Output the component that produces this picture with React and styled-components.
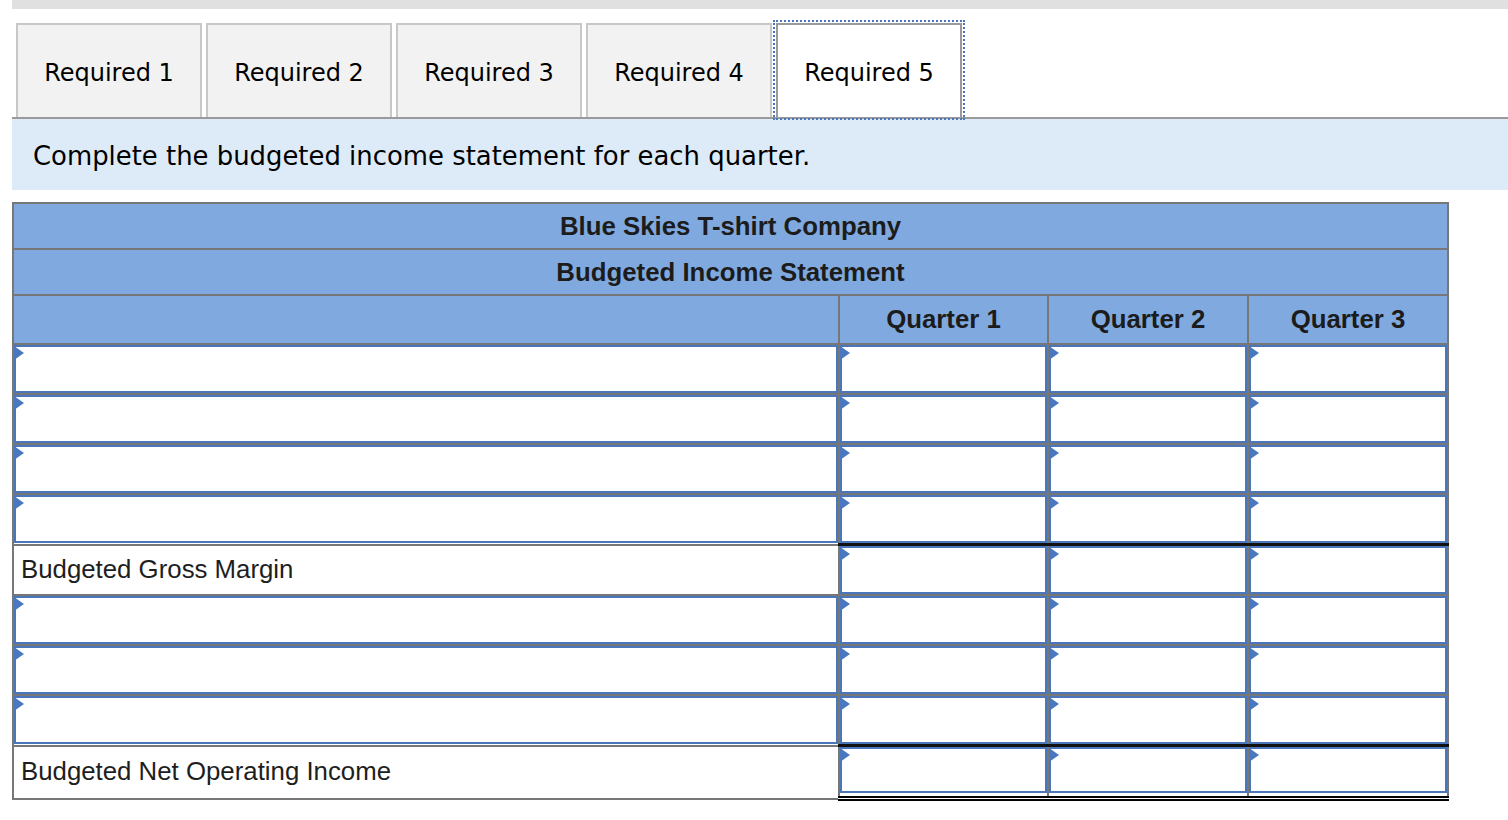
import React from 'react'
import styled, { createGlobalStyle, css } from 'styled-components'

const GlobalStyle = createGlobalStyle`
  html, body {
    margin: 0;
    padding: 0;
    background: #fff;
  }
`

const Page = styled.div`
  width: 1508px;
  padding-left: 12px;
  box-sizing: border-box;
`

const TopBar = styled.div`
  height: 9px;
  background: #e0e0e0;
`

const TabRow = styled.div`
  display: flex;
  gap: 4px;
  margin-top: 14px;
  padding-left: 4px;
  border-bottom: 2px solid #9a9a9a;
`

const Tab = styled.button`
  width: 186px;
  height: 94px;
  box-sizing: border-box;
  margin: 0;
  padding: 4px 0 0;
  background: #f2f2f2;
  border: 2px solid #c8c8c8;
  border-bottom: none;
  font-family: 'DejaVu Sans', Verdana, sans-serif;
  font-size: 24px;
  color: #000;
  cursor: pointer;

  ${(p) =>
    p.active &&
    css`
      background: #fff;
      border-color: #9a9a9a;
      outline: 2px dotted #4a78c0;
      outline-offset: 1px;
    `}
`

const Banner = styled.div`
  height: 71px;
  display: flex;
  align-items: center;
  padding: 3px 0 0 21px;
  box-sizing: border-box;
  background: #ddeaf7;
  font-family: 'DejaVu Sans', Verdana, sans-serif;
  font-size: 25.9px;
  color: #000;
`

const Table = styled.table`
  margin-top: 12px;
  width: 1436px;
  table-layout: fixed;
  border-collapse: collapse;
  font-family: 'Liberation Sans', Arial, sans-serif;
  font-size: 25.8px;
  color: #1e1e1e;
`

const Head = styled.th`
  height: ${(p) => p.h}px;
  padding: 0;
  background: #80aadf;
  border: 2px solid #777;
  font-weight: bold;
  text-align: center;
  color: #1c1c1c;
`

const Cell = styled.td`
  height: ${(p) => p.h}px;
  padding: 0;
  border: 2px solid #777;
  vertical-align: top;

  ${(p) =>
    p.total &&
    css`
      border-top: 3px solid #111;
    `}
  ${(p) =>
    p.double &&
    css`
      border-bottom: 5px double #000;
    `}
`

const Label = styled.div`
  height: ${(p) => p.h}px;
  display: flex;
  align-items: center;
  padding-left: 7px;
`

const Field = styled.div`
  position: relative;

  &::before {
    content: '';
    position: absolute;
    left: 0;
    top: 1px;
    border-left: 10px solid #4a78c0;
    border-top: 7px solid transparent;
    border-bottom: 7px solid transparent;
  }
`

const Input = styled.input`
  display: block;
  width: 100%;
  height: ${(p) => p.h}px;
  box-sizing: border-box;
  margin: 0;
  border: 2px solid #4a77bc;
  background: #fff;
  font: inherit;
  outline: none;
`

const rows = [
  { kind: 'input' },
  { kind: 'input' },
  { kind: 'input' },
  { kind: 'input' },
  { kind: 'label', text: 'Budgeted Gross Margin' },
  { kind: 'input' },
  { kind: 'input' },
  { kind: 'input' },
  { kind: 'label', text: 'Budgeted Net Operating Income', last: true },
]

const quarters = ['Quarter 1', 'Quarter 2', 'Quarter 3']

export default function App() {
  return (
    <Page>
      <GlobalStyle />
      <TopBar />
      <TabRow>
        {[1, 2, 3, 4, 5].map((n) => (
          <Tab key={n} active={n === 5}>
            Required {n}
          </Tab>
        ))}
      </TabRow>
      <Banner>Complete the budgeted income statement for each quarter.</Banner>
      <Table>
        <colgroup>
          <col style={{ width: 826 }} />
          <col style={{ width: 209 }} />
          <col style={{ width: 200 }} />
          <col style={{ width: 200 }} />
        </colgroup>
        <thead>
          <tr>
            <Head colSpan={4} h={44}>
              Blue Skies T-shirt Company
            </Head>
          </tr>
          <tr>
            <Head colSpan={4} h={44}>
              Budgeted Income Statement
            </Head>
          </tr>
          <tr>
            <Head h={47} />
            {quarters.map((q) => (
              <Head key={q} h={47}>
                {q}
              </Head>
            ))}
          </tr>
        </thead>
        <tbody>
          {rows.map((r, i) => {
            const h = r.last ? 49 : 48
            return (
              <tr key={i}>
                <Cell h={h}>
                  {r.kind === 'label' ? (
                    <Label h={h}>{r.text}</Label>
                  ) : (
                    <Field>
                      <Input h={h} />
                    </Field>
                  )}
                </Cell>
                {quarters.map((q) => (
                  <Cell key={q} h={h} total={r.kind === 'label'} double={r.last}>
                    <Field>
                      <Input h={r.last ? 46 : h} />
                    </Field>
                  </Cell>
                ))}
              </tr>
            )
          })}
        </tbody>
      </Table>
    </Page>
  )
}
